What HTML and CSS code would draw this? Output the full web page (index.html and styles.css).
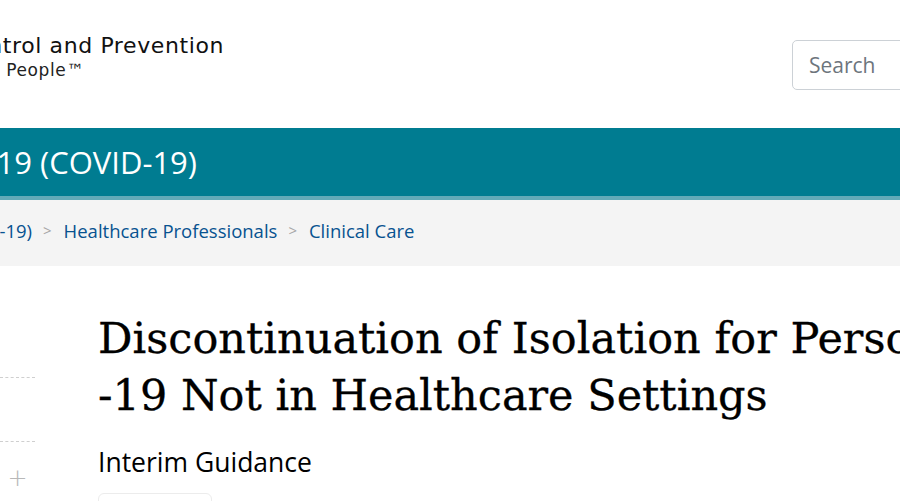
FILE: index.html
```html
<!DOCTYPE html>
<html lang="en">

<head>
    <meta charset="UTF-8">
    <meta name="viewport" content="width=device-width, initial-scale=1.0">
    <link rel="stylesheet" href="styles.css">
</head>

<body>
    <header class="site-header">
        <div class="logo">
            <div class="logo-line">
                <span class="logo-name">Centers for Disease Control and Prevention</span>
            </div>
            <div class="logo-line tagline">
                <span>CDC 24/7: Saving Lives, Protecting People&trade;</span>
            </div>
        </div>
        <form class="search">
            <input type="text" class="search-input" placeholder="Search">
        </form>
    </header>

    <div class="topic-bar">
        <div class="topic-title">
            <span>Coronavirus Disease 2019 (COVID-19)</span>
        </div>
    </div>

    <nav class="breadcrumb">
        <div class="crumb-first">
            <a href="#">Coronavirus Disease 2019 (COVID-19)</a>
        </div>
        <span class="sep">&gt;</span>
        <a href="#">Healthcare Professionals</a>
        <span class="sep">&gt;</span>
        <a href="#">Clinical Care</a>
    </nav>

    <main class="page">
        <aside class="side-nav">
            <div class="side-item"></div>
            <div class="side-item"></div>
            <div class="side-plus">+</div>
        </aside>

        <div class="content">
            <h1 class="page-title">Discontinuation of Isolation for Persons with COVID<br>-19 Not in Healthcare Settings</h1>
            <p class="subtitle">Interim Guidance</p>
            <div class="tag-box"></div>
        </div>
    </main>
</body>

</html>
```

FILE: styles.css
```css
* {
    box-sizing: border-box;
    margin: 0;
    padding: 0;
}

body {
    background-color: #fff;
    font-family: "Open Sans", "Liberation Sans", sans-serif;
    width: 900px;
    height: 501px;
    overflow: hidden;
}

a {
    color: #075290;
    text-decoration: none;
}

/* header */
.site-header {
    display: flex;
    align-items: flex-start;
    height: 128px;
}

.logo {
    width: 224px;
    padding-top: 33px;
    display: flex;
    flex-direction: column;
    align-items: flex-end;
}

.logo-line {
    display: flex;
    justify-content: flex-end;
    white-space: nowrap;
    width: 224px;
    font-family: "DejaVu Sans", sans-serif;
    font-size: 22px;
    letter-spacing: 0.6px;
    color: #111;
    line-height: 26px;
}

.logo-line.tagline {
    width: 84px;
    align-self: flex-start;
    font-size: 17px;
    letter-spacing: 0.6px;
    line-height: 22px;
    color: #222;
}

.search {
    margin-left: auto;
    margin-right: -80px;
    margin-top: 40px;
}

.search-input {
    width: 188px;
    height: 50px;
    border: 1px solid #ccd1d6;
    border-radius: 5px;
    padding: 0 16px;
    font-family: "Open Sans", sans-serif;
    font-size: 21px;
    color: #333;
    outline: none;
}

.search-input::placeholder {
    color: #6d757d;
}

/* teal band */
.topic-bar {
    height: 72px;
    background-color: #007c91;
    border-bottom: 4px solid #62aab8;
    display: flex;
    align-items: center;
}

.topic-title {
    width: 197px;
    display: flex;
    justify-content: flex-end;
    white-space: nowrap;
    color: #fff;
    font-size: 31px;
}

/* breadcrumb */
.breadcrumb {
    height: 66px;
    background-color: #f4f4f4;
    display: flex;
    align-items: center;
    font-size: 18.5px;
    white-space: nowrap;
    padding-bottom: 6px;
}

.crumb-first {
    width: 32px;
    display: flex;
    justify-content: flex-end;
}

.sep {
    color: #a6a6a6;
    font-size: 15px;
    margin: 0 12px 0 11px;
}

/* main */
.page {
    display: grid;
    grid-template-columns: 35px 1fr;
    column-gap: 63px;
}

.side-nav {
    padding-top: 111px;
}

.side-item {
    height: 64px;
    border-top: 1px dashed #cfcfcf;
}

.side-nav .side-item:nth-child(2) {
    height: 22px;
}

.side-plus {
    text-align: center;
    font-family: "DejaVu Sans", sans-serif;
    font-weight: 200;
    font-size: 24px;
    line-height: 30px;
    color: #b8b8b8;
}

.content {
    padding-top: 44px;
    white-space: nowrap;
}

.page-title {
    font-family: "DejaVu Serif", serif;
    font-weight: normal;
    font-size: 43px;
    line-height: 57px;
    color: #000;
    -webkit-text-stroke: 0.3px #000;
}

.subtitle {
    margin-top: 21px;
    font-size: 26.5px;
    line-height: 34px;
    color: #000;
}

.tag-box {
    margin-top: 14px;
    width: 114px;
    height: 40px;
    border: 1px solid #ececec;
    border-radius: 6px;
}
```
